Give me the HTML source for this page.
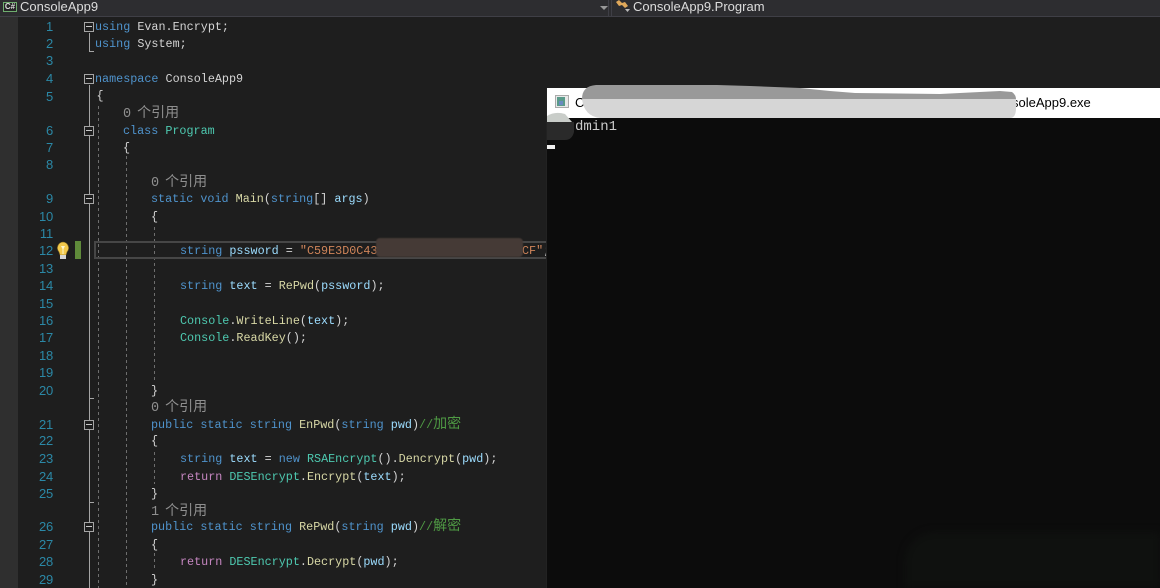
<!DOCTYPE html>
<html><head><meta charset="utf-8"><style>
html,body{margin:0;padding:0;background:#1e1e1e}
#r{position:relative;width:1160px;height:588px;overflow:hidden;background:#1e1e1e;font-family:"Liberation Mono","Noto Sans CJK SC",monospace;font-size:11.75px;color:#d4d4d4}
#r div{position:absolute}
.l{white-space:pre;line-height:18px;height:18px}
.n{left:20px;width:33px;text-align:right;color:#2b88a6;line-height:18px;height:18px;font:13px/18px "Liberation Sans",sans-serif;letter-spacing:-.2px}
.k{color:#4f93cc}.t{color:#4ec9b0}.m{color:#d8d8a6}.v{color:#9cdcfe}.s{color:#d0855a}.p{color:#c586c0}.c{color:#4f9a44}
.c b,.r b{font:400 14px/0 "Noto Sans CJK SC",sans-serif}
.r{color:#8f8f8f;font-size:13.5px}.r b{margin-left:6px}
.f{left:84px;width:8px;height:8px;border:1px solid #a5a5a5;background:#1e1e1e}
.f:after{content:"";position:absolute;left:1px;top:3px;width:6px;height:1px;background:#c8c8c8}
.g{width:1px;background:repeating-linear-gradient(to bottom,#6e6e6e 0 3px,transparent 3px 6px)}
.h{font:13px "Liberation Sans",sans-serif;color:#dcdcdc;white-space:pre}
</style></head><body><div id="r">
<div style="left:0;top:0;width:1160px;height:16px;background:#2d2d30"></div>
<div style="left:0;top:16px;width:1160px;height:1px;background:#3f3f46"></div>
<div style="left:608px;top:0;width:1px;height:16px;background:#3f3f46"></div>
<div style="left:611px;top:0;width:1px;height:16px;background:#3f3f46"></div>
<div style="left:0;top:17px;width:18px;height:571px;background:#2f2f2f"></div>

<div style="left:3px;top:2px;width:12px;height:8px;border:1px solid #6fae6f;font:700 8px/8px 'Liberation Sans',sans-serif;color:#ddd;text-align:center;background:#252526">C#</div>
<div class="h" style="left:20px;top:-1px;line-height:15px">ConsoleApp9</div>
<div style="left:600px;top:6px;width:0;height:0;border:4px solid transparent;border-top-color:#999;border-bottom:0"></div>
<svg style="position:absolute;left:615px;top:0" width="17" height="14"><path d="M1 2l3-2 3 3 3-1 3 4-3 2-3-3-3 1z" fill="#e0a85a"/><path d="M10 9h5l-2.500 3z" fill="#bbb"/></svg>
<div class="h" style="left:633px;top:-1px;line-height:15px">ConsoleApp9.Program</div>

<div style="left:89px;top:33px;width:1px;height:18px;background:#a5a5a5"></div>
<div style="left:89px;top:51px;width:5px;height:1px;background:#a5a5a5"></div>
<div style="left:89px;top:85px;width:1px;height:503px;background:#a5a5a5"></div>
<div style="left:89px;top:398px;width:5px;height:1px;background:#a5a5a5"></div>
<div style="left:89px;top:502px;width:5px;height:1px;background:#a5a5a5"></div>
<div class="f" style="top:22px"></div><div class="f" style="top:74px"></div><div class="f" style="top:126px"></div><div class="f" style="top:194px"></div><div class="f" style="top:420px"></div><div class="f" style="top:522px"></div>
<div class="g" style="left:98px;top:106px;height:482px"></div>
<div class="g" style="left:126px;top:156px;height:432px"></div>
<div class="g" style="left:154px;top:227px;height:155px"></div>
<div class="g" style="left:154px;top:452px;height:32px"></div>
<div class="g" style="left:154px;top:553px;height:18px"></div>

<div style="left:94px;top:241px;width:451px;height:14px;border:2px solid #464646"></div>
<div style="left:75px;top:241px;width:6px;height:18px;background:#5f8a3a"></div>
<svg style="position:absolute;left:56px;top:241px" width="14" height="19"><path d="M7 1a6 6 0 0 0-4 10l1 3h6l1-3a6 6 0 0 0-4-10z" fill="#f2c94c" stroke="#8a6d1f" stroke-width=".6"/><path d="M5 5h4l-1.500 3v5h-1V8z" fill="#fff6cc"/><rect x="4" y="14" width="6" height="4" fill="#d5d5d5"/></svg>

<div class="n" style="top:18px">1</div><div class="n" style="top:35px">2</div><div class="n" style="top:52px">3</div><div class="n" style="top:70px">4</div><div class="n" style="top:88px">5</div><div class="n" style="top:122px">6</div><div class="n" style="top:139px">7</div><div class="n" style="top:156px">8</div><div class="n" style="top:190px">9</div><div class="n" style="top:208px">10</div><div class="n" style="top:225px">11</div><div class="n" style="top:242px">12</div><div class="n" style="top:260px">13</div><div class="n" style="top:277px">14</div><div class="n" style="top:295px">15</div><div class="n" style="top:312px">16</div><div class="n" style="top:329px">17</div><div class="n" style="top:347px">18</div><div class="n" style="top:364px">19</div><div class="n" style="top:382px">20</div><div class="n" style="top:416px">21</div><div class="n" style="top:432px">22</div><div class="n" style="top:450px">23</div><div class="n" style="top:468px">24</div><div class="n" style="top:485px">25</div><div class="n" style="top:518px">26</div><div class="n" style="top:536px">27</div><div class="n" style="top:553px">28</div><div class="n" style="top:571px">29</div>

<div class="l" style="left:95px;top:18px"><span class="k">using</span> Evan.Encrypt;</div>
<div class="l" style="left:95px;top:35px"><span class="k">using</span> System;</div>
<div class="l" style="left:95px;top:70px"><span class="k">namespace</span> ConsoleApp9</div>
<div class="l" style="left:96.500px;top:87px">{</div>
<div class="l r" style="left:123px;top:106px">0<b>个引用</b></div>
<div class="l" style="left:123px;top:122px"><span class="k">class</span> <span class="t">Program</span></div>
<div class="l" style="left:123px;top:139px">{</div>
<div class="l r" style="left:151px;top:175px">0<b>个引用</b></div>
<div class="l" style="left:151px;top:190px"><span class="k">static void</span> <span class="m">Main</span>(<span class="k">string</span>[] <span class="v">args</span>)</div>
<div class="l" style="left:151px;top:208px">{</div>
<div class="l" style="left:180px;top:242px"><span class="k">string</span> <span class="v">pssword</span> = <span class="s">"C59E3D0C43</span></div>
<div class="l s" style="left:522px;top:242px">CF"<span style="color:#dcdcdc">;</span></div>
<div class="l" style="left:180px;top:277px"><span class="k">string</span> <span class="v">text</span> = <span class="m">RePwd</span>(<span class="v">pssword</span>);</div>
<div class="l" style="left:180px;top:312px"><span class="t">Console</span>.<span class="m">WriteLine</span>(<span class="v">text</span>);</div>
<div class="l" style="left:180px;top:329px"><span class="t">Console</span>.<span class="m">ReadKey</span>();</div>
<div class="l" style="left:151px;top:382px">}</div>
<div class="l r" style="left:151px;top:400px">0<b>个引用</b></div>
<div class="l" style="left:151px;top:416px"><span class="k">public static string</span> <span class="m">EnPwd</span>(<span class="k">string</span> <span class="v">pwd</span>)<span class="c">//<b>加密</b></span></div>
<div class="l" style="left:151px;top:432px">{</div>
<div class="l" style="left:180px;top:450px"><span class="k">string</span> <span class="v">text</span> = <span class="k">new</span> <span class="t">RSAEncrypt</span>().<span class="m">Dencrypt</span>(<span class="v">pwd</span>);</div>
<div class="l" style="left:180px;top:468px"><span class="p">return</span> <span class="t">DESEncrypt</span>.<span class="m">Encrypt</span>(<span class="v">text</span>);</div>
<div class="l" style="left:151px;top:485px">}</div>
<div class="l r" style="left:151px;top:504px">1<b>个引用</b></div>
<div class="l" style="left:151px;top:518px"><span class="k">public static string</span> <span class="m">RePwd</span>(<span class="k">string</span> <span class="v">pwd</span>)<span class="c">//<b>解密</b></span></div>
<div class="l" style="left:151px;top:536px">{</div>
<div class="l" style="left:180px;top:553px"><span class="p">return</span> <span class="t">DESEncrypt</span>.<span class="m">Decrypt</span>(<span class="v">pwd</span>);</div>
<div class="l" style="left:151px;top:571px">}</div>

<div style="left:376px;top:238px;width:147px;height:19px;background:#453a36;border-radius:4px;filter:blur(.6px)"></div>

<div style="left:546px;top:88px;width:1px;height:500px;background:#222"></div>
<div style="left:547px;top:88px;width:613px;height:30px;background:#fff"></div>
<div style="left:547px;top:118px;width:613px;height:470px;background:#0c0c0c"></div>
<div style="left:905px;top:532px;width:255px;height:56px;background:#0f110f;border-radius:30px 0 0 0;filter:blur(4px)"></div>
<svg style="position:absolute;left:555px;top:95px" width="15" height="14"><rect x=".5" y=".5" width="13" height="12" fill="#e8e8e8" stroke="#aaa"/><rect x="2" y="2" width="8" height="9" fill="#5a9a8a"/><rect x="4" y="6" width="4" height="4" fill="#6a8ac0"/></svg>
<div class="h" style="left:575px;top:95px;color:#000;line-height:16px">C</div>
<div class="h" style="left:1012px;top:95px;color:#000;line-height:16px">soleApp9.exe</div>
<svg style="position:absolute;left:0;top:0" width="1160" height="588">
<path d="M582 99Q582 86 596 85H717L750 86 800 88 830 91 855 93 940 94 960 93 1000 91 1012 92Q1016 95 1016 99Z" fill="#999"/>
<path d="M582 99H1016V108Q1016 118 1010 118H600Q584 116 582 99Z" fill="#d6d6d6"/>
<path d="M547 116Q555 111 565 114L572 122H547Z" fill="#c9cdc9"/>
<path d="M547 122H574V132Q572 140 565 140H547Z" fill="#2a2a2a"/>
</svg>
<div class="l" style="left:575px;top:118px;font:14px/18px 'Liberation Mono',monospace;color:#ccc">dmin1</div>
<div style="left:547px;top:145px;width:8px;height:4px;background:#f0f0f0"></div>
</div></body></html>
